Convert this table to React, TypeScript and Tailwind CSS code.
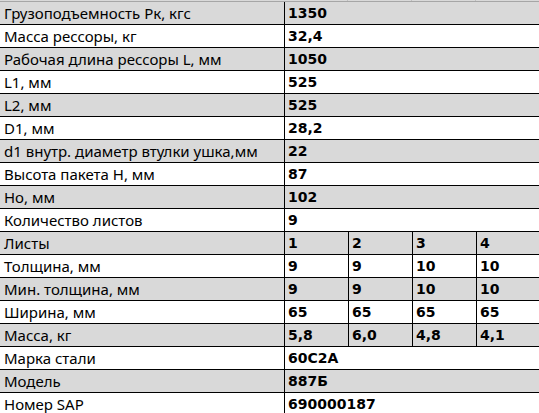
import React from "react";

type Row = { label: string; values: string[] };

const rows: Row[] = [
  { label: "Грузоподъемность Рк, кгс", values: ["1350"] },
  { label: "Масса рессоры, кг", values: ["32,4"] },
  { label: "Рабочая длина рессоры L, мм", values: ["1050"] },
  { label: "L1, мм", values: ["525"] },
  { label: "L2, мм", values: ["525"] },
  { label: "D1, мм", values: ["28,2"] },
  { label: "d1 внутр. диаметр втулки ушка,мм", values: ["22"] },
  { label: "Высота пакета H, мм", values: ["87"] },
  { label: "Hо, мм", values: ["102"] },
  { label: "Количество листов", values: ["9"] },
  { label: "Листы", values: ["1", "2", "3", "4"] },
  { label: "Толщина, мм", values: ["9", "9", "10", "10"] },
  { label: "Мин. толщина, мм", values: ["9", "9", "10", "10"] },
  { label: "Ширина, мм", values: ["65", "65", "65", "65"] },
  { label: "Масса, кг", values: ["5,8", "6,0", "4,8", "4,1"] },
  { label: "Марка стали", values: ["60С2А"] },
  { label: "Модель", values: ["887Б"] },
  { label: "Номер SAP", values: ["690000187"] },
];

const labelFont = { fontFamily: '"Noto Sans", sans-serif' };
const valueFont = { fontFamily: '"DejaVu Sans", sans-serif' };

export default function App() {
  return (
    <div className="w-[539px] h-[413px] overflow-hidden bg-white text-black">
      <div className="flex h-[1px] bg-[#d9d9d9]">
        <div className="w-[348px] border-r border-[#bfbfbf]" />
        <div className="w-[64px] border-r border-[#bfbfbf]" />
        <div className="w-[64px] border-r border-[#bfbfbf]" />
        <div className="flex-1" />
      </div>
      <div className="h-[1px] bg-[#a6a6a6]" />
      {rows.map((r, i) => (
        <div
          key={i}
          className={`flex h-[23px] shrink-0 border-b border-black ${
            i % 2 === 0 ? "bg-[#d9d9d9]" : "bg-white"
          }`}
        >
          <div
            className="w-[285px] shrink-0 border-r border-black pl-[4px] text-[15px] leading-[22px] whitespace-nowrap overflow-hidden"
            style={labelFont}
          >
            {r.label}
          </div>
          {r.values.length === 1 ? (
            <div
              className="flex-1 pl-[3px] text-[14px] font-bold leading-[22px] whitespace-nowrap"
              style={valueFont}
            >
              {r.values[0]}
            </div>
          ) : (
            r.values.map((v, j) => (
              <div
                key={j}
                className={`${
                  j < 3 ? "w-[64px] border-r border-black" : "flex-1"
                } shrink-0 pl-[3px] text-[14px] font-bold leading-[22px] whitespace-nowrap`}
                style={valueFont}
              >
                {v}
              </div>
            ))
          )}
        </div>
      ))}
    </div>
  );
}
